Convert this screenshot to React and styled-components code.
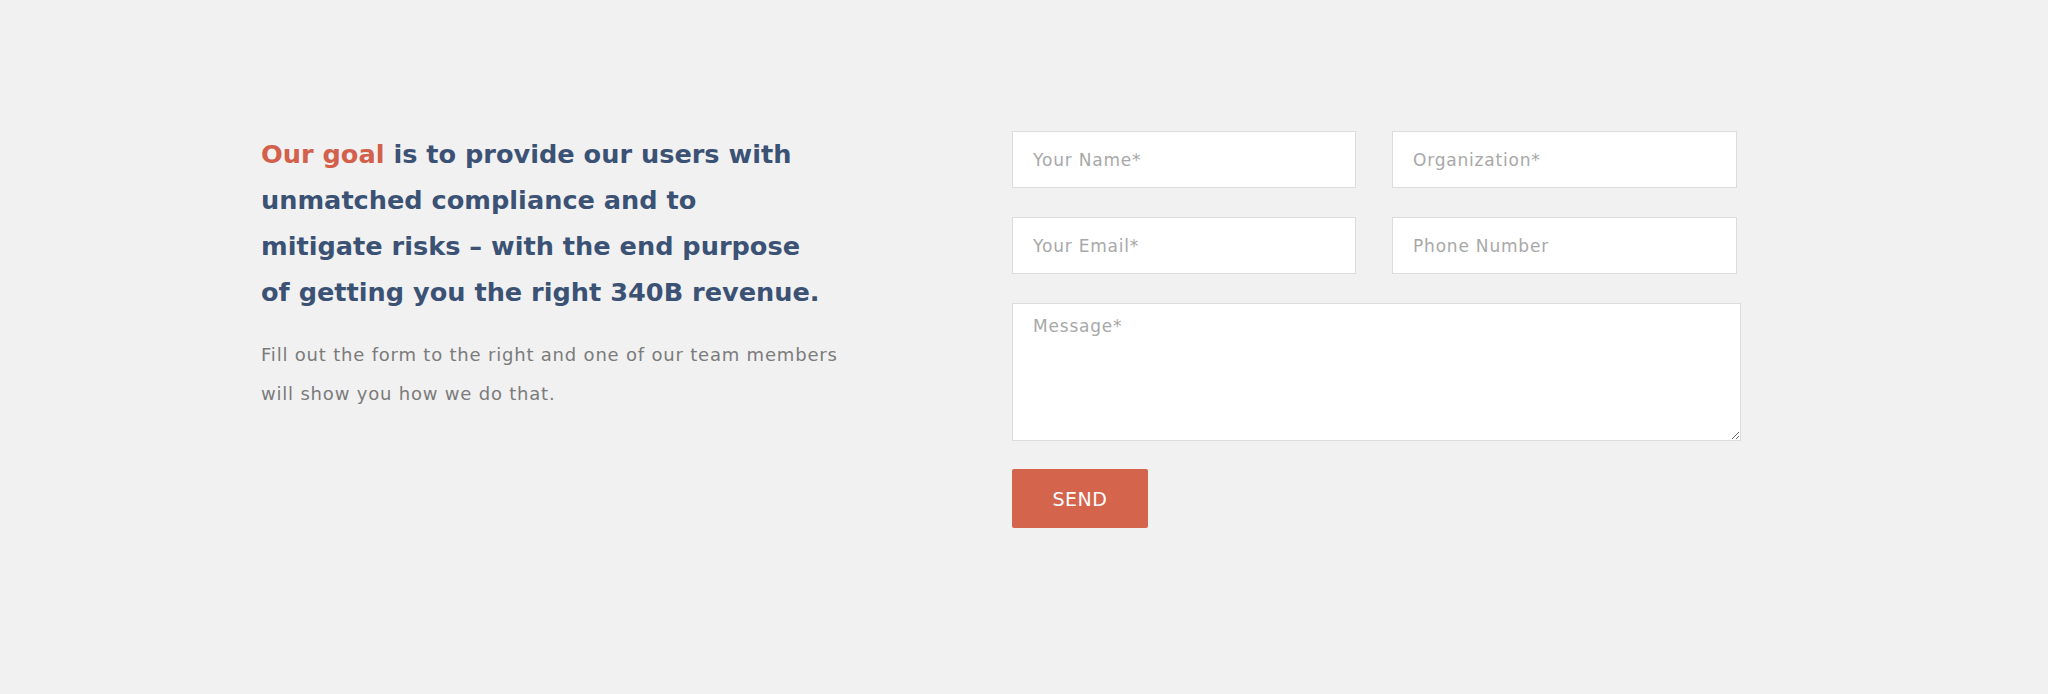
import React from 'react';
import styled, { createGlobalStyle } from 'styled-components';

const GlobalStyle = createGlobalStyle`
    body {
        margin: 0;
        background-color: #f1f1f1;
        font-family: "DejaVu Sans", "Liberation Sans", sans-serif;
    }
    * {
        box-sizing: border-box;
    }
`;

const Section = styled.section`
    min-height: 694px;
    display: grid;
    grid-template-columns: 576px 729px;
    column-gap: 175px;
    align-items: start;
    padding: 131px 0 0 261px;
`;

const Intro = styled.div`
    display: flex;
    flex-direction: column;
    gap: 20px;
`;

const Heading = styled.h2`
    margin: 0;
    font-size: 25.6px;
    line-height: 46px;
    font-weight: 700;
    color: #3b5275;
    white-space: nowrap;
`;

const Accent = styled.span`
    color: #d2604a;
`;

const Lead = styled.p`
    margin: 0;
    font-size: 18px;
    line-height: 39px;
    letter-spacing: 0.8px;
    font-weight: 400;
    color: #7b7b7b;
    white-space: nowrap;
`;

const Form = styled.form`
    display: grid;
    grid-template-columns: 344px 345px;
    column-gap: 36px;
    row-gap: 29px;
`;

const Field = styled.input`
    height: 57px;
    padding: 0 20px;
    border: 1px solid #dcdcdc;
    border-radius: 0;
    background-color: #fff;
    font-family: inherit;
    font-size: 17px;
    letter-spacing: 0.8px;
    color: #555;
    outline: none;

    &::placeholder {
        color: #a8a8a8;
    }
`;

const Message = styled.textarea`
    grid-column: 1 / -1;
    width: 729px;
    height: 138px;
    padding: 11px 20px;
    border: 1px solid #dcdcdc;
    border-radius: 0;
    background-color: #fff;
    font-family: inherit;
    font-size: 17px;
    letter-spacing: 0.8px;
    line-height: 1.4;
    color: #555;
    outline: none;
    resize: vertical;

    &::placeholder {
        color: #a8a8a8;
    }
`;

const SendButton = styled.button`
    justify-self: start;
    width: 136px;
    height: 59px;
    margin-top: -1px;
    border: none;
    border-radius: 2px;
    background-color: #d4644c;
    color: #fff;
    font-family: inherit;
    font-size: 19px;
    letter-spacing: 0.5px;
    font-weight: 400;
    text-transform: uppercase;
    cursor: pointer;
`;

export default function App(){
    return(
        <>
            <GlobalStyle/>
            <Section>
                <Intro>
                    <Heading>
                        <Accent>Our goal</Accent> is to provide our users with<br/>
                        unmatched compliance and to<br/>
                        mitigate risks – with the end purpose<br/>
                        of getting you the right 340B revenue.
                    </Heading>
                    <Lead>
                        Fill out the form to the right and one of our team members<br/>
                        will show you how we do that.
                    </Lead>
                </Intro>
                <Form onSubmit={e=>e.preventDefault()}>
                    <Field placeholder='Your Name*'/>
                    <Field placeholder='Organization*'/>
                    <Field type='email' placeholder='Your Email*'/>
                    <Field placeholder='Phone Number'/>
                    <Message placeholder='Message*'/>
                    <SendButton type='submit'>Send</SendButton>
                </Form>
            </Section>
        </>
    )
}
